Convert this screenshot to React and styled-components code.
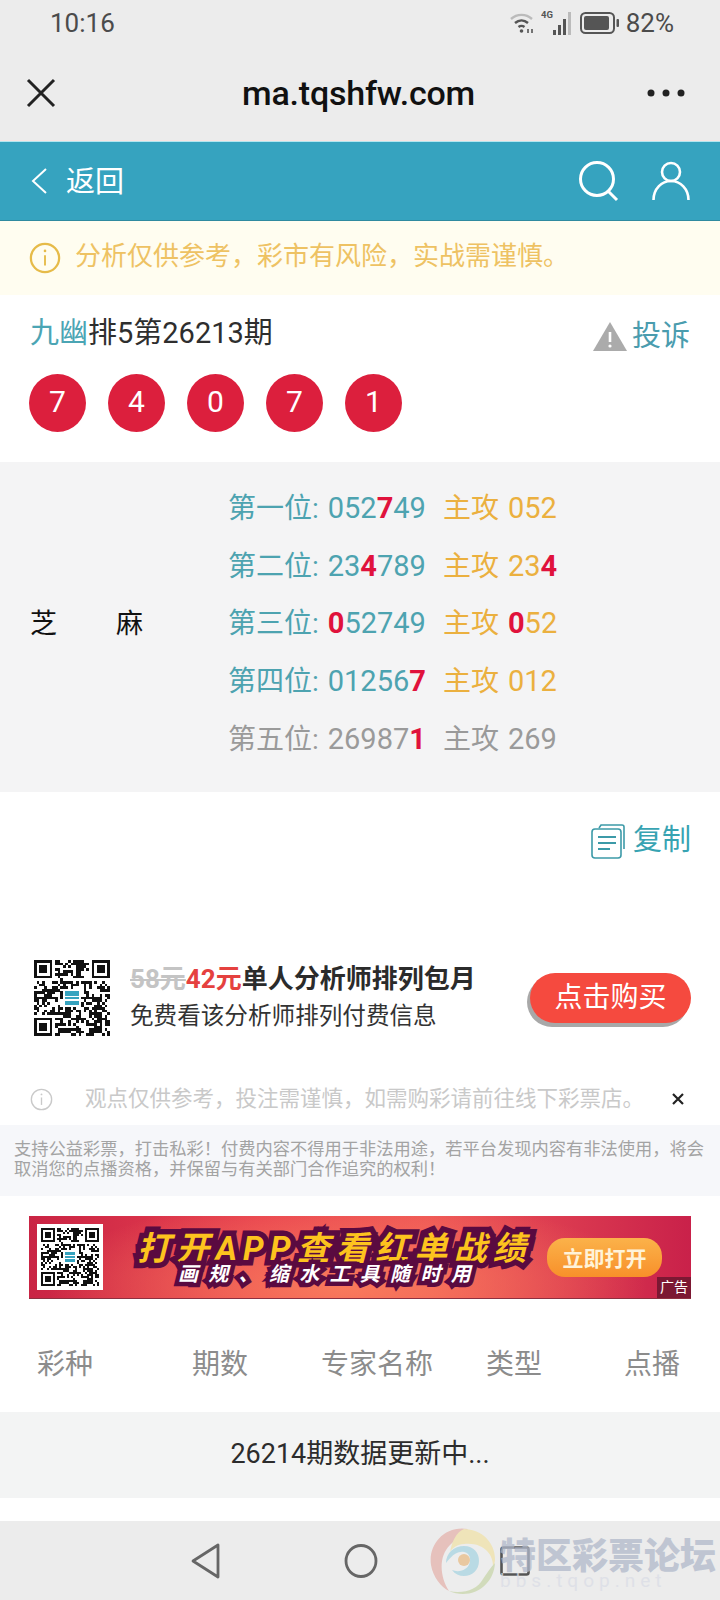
import React from 'react'
import styled, { createGlobalStyle } from 'styled-components'

const GlobalStyle = createGlobalStyle`
  html, body {
    margin: 0;
    padding: 0;
    background: #fff;
  }
  * {
    box-sizing: border-box;
  }
  body {
    font-family: Roboto, "Noto Sans CJK SC", sans-serif;
  }
`

const Page = styled.div`
  position: relative;
  width: 720px;
  height: 1600px;
  overflow: hidden;
  background: #fff;
`

const TopBar = styled.div`
  height: 141px;
  background: #ececec;
  border-bottom: 1px solid #f6e4e2;
`

const StatusBar = styled.div`
  height: 46px;
  padding: 0 46px 0 50px;
  display: flex;
  align-items: center;
  justify-content: space-between;
  color: #4b4b4b;
  font-size: 26px;
`

const StatusRight = styled.div`
  display: flex;
  align-items: center;
  gap: 6px;
`

const TitleBar = styled.div`
  height: 94px;
  padding: 0 35px 0 26px;
  display: flex;
  align-items: center;
  justify-content: space-between;
`

const TitleText = styled.div`
  font-size: 34px;
  font-weight: 500;
  color: #111;
  margin-left: 14px;
  letter-spacing: -0.2px;
`

const NavBar = styled.div`
  height: 80px;
  background: #36a3bf;
  border-top: 1px solid #b5e6ef;
  border-bottom: 1px solid #2f8a9f;
  padding: 0 30px 0 30px;
  display: flex;
  align-items: center;
  justify-content: space-between;
  color: #fff;
`

const NavBack = styled.div`
  display: flex;
  align-items: center;
  gap: 18px;
  font-size: 29px;
  span {
    margin-top: -4px;
  }
`

const NavIcons = styled.div`
  display: flex;
  align-items: center;
  gap: 32px;
`

const Notice = styled.div`
  height: 74px;
  background: #fffdf0;
  padding: 0 29px;
  display: flex;
  align-items: center;
  gap: 14px;
  color: #eec263;
  font-size: 26px;
  span {
    margin-top: -10px;
  }
`

const IssueRow = styled.div`
  padding: 19px 30px 0 30px;
  height: 79px;
  display: flex;
  justify-content: space-between;
  align-items: flex-start;
`

const IssueTitle = styled.div`
  font-size: 29px;
  line-height: 38px;
  color: #2e2e2e;
  span {
    color: #4ba5b4;
  }
`

const Complain = styled.div`
  margin-top: 2px;
  display: flex;
  align-items: center;
  gap: 4px;
  font-size: 29px;
  line-height: 40px;
  color: #4a9cae;
`

const Balls = styled.div`
  height: 88px;
  padding-left: 29px;
  display: flex;
  gap: 22px;
`

const Ball = styled.div`
  width: 57px;
  height: 58px;
  padding-bottom: 3px;
  border-radius: 50%;
  background: #dc1f3d;
  color: #fff;
  font-size: 30px;
  display: flex;
  align-items: center;
  justify-content: center;
`

const Panel = styled.div`
  height: 330px;
  background: #f4f4f5;
  padding-bottom: 11px;
  display: flex;
  align-items: center;
`

const ExpertName = styled.div`
  width: 228px;
  padding-left: 30px;
  display: flex;
  gap: 59px;
  font-size: 27px;
  color: #111;
`

const Rows = styled.div`
  display: flex;
  flex-direction: column;
`

const PickRow = styled.div`
  height: 57.8px;
  display: flex;
  align-items: center;
  font-size: 28px;
  color: ${p => (p.$muted ? '#9a9a9a' : '#4da3b0')};
`

const PickLabel = styled.div`
  width: 215px;
  white-space: pre;
  word-spacing: 2px;
`

const PickFocus = styled.div`
  white-space: pre;
  word-spacing: 2px;
  color: ${p => (p.$muted ? '#9a9a9a' : '#ebb03f')};
`

const Num = styled.span`
  font-size: 29px;
`

const Hit = styled.b`
  color: #e0123c;
  font-weight: 700;
`

const CopyRow = styled.div`
  height: 92px;
  padding: 28px 29px 0 0;
  display: flex;
  justify-content: flex-end;
  align-items: flex-start;
  gap: 8px;
  font-size: 29px;
  line-height: 40px;
  color: #37a3b2;
`

const Promo = styled.div`
  height: 97px;
  margin-top: 65px;
  padding: 0 29px 0 34px;
  display: flex;
  align-items: center;
`

const PromoText = styled.div`
  margin-left: 20px;
  flex: 1;
`

const PromoTitle = styled.div`
  font-size: 26px;
  line-height: 36px;
  font-weight: 700;
  color: #2b2b2b;
`

const OldPrice = styled.s`
  color: #c4c4c4;
`

const NewPrice = styled.span`
  color: #e5413f;
`

const PromoSub = styled.div`
  font-size: 23.6px;
  line-height: 36px;
  color: #333;
  margin-top: 1px;
`

const BuyButton = styled.div`
  width: 161px;
  height: 50px;
  margin-top: 1px;
  padding-bottom: 7px;
  border-radius: 25px;
  background: #f54a3f;
  box-shadow: -3px 4px 0 #a8a8a8;
  color: #fff;
  font-size: 28px;
  display: flex;
  align-items: center;
  justify-content: center;
`

const Tip = styled.div`
  height: 55px;
  margin-top: 24px;
  padding: 3px 36px 0 30px;
  display: flex;
  align-items: center;
  color: #c9c9c9;
  font-size: 21.5px;
`

const TipText = styled.div`
  margin: -6px 0 0 32px;
  flex: 1;
  white-space: nowrap;
`

const TipClose = styled.div`
  color: #222;
  line-height: 0;
`

const Disclaimer = styled.div`
  height: 71px;
  background: #f6f7fa;
  padding: 14px 14px 0 14px;
  font-size: 17.25px;
  line-height: 20px;
  color: #a3a3a3;
`

const Banner = styled.div`
  position: relative;
  height: 83px;
  margin: 20px 29px 0;
  padding-left: 8px;
  display: flex;
  align-items: center;
  overflow: hidden;
  background:
    radial-gradient(ellipse 300px 90px at 48% 85%, #f97a5c 0%, rgba(249, 122, 92, 0) 100%),
    linear-gradient(90deg, #c92444 0%, #e8414f 35%, #ee5556 60%, #c9214a 100%);
  border-bottom: 1px solid #8d3040;
`

const BannerQr = styled.div`
  width: 66px;
  height: 66px;
  background: #fff;
  padding: 4px;
  line-height: 0;
`

const BannerCopy = styled.div`
  margin-left: 34px;
  width: 407px;
`

const BannerHead = styled.div`
  margin-top: 4px;
  font-size: 33px;
  line-height: 35px;
  font-weight: 700;
  font-style: italic;
  letter-spacing: 6.2px;
  white-space: nowrap;
  color: #fdc31e;
  -webkit-text-stroke: 11px #5a0a40;
  paint-order: stroke fill;
`

const BannerSub = styled.div`
  margin: -5px 0 0 41px;
  font-size: 20px;
  line-height: 26px;
  font-weight: 700;
  font-style: italic;
  letter-spacing: 10.3px;
  white-space: nowrap;
  color: #fff;
  -webkit-text-stroke: 9px #5a0a40;
  paint-order: stroke fill;
`

const BannerBtn = styled.div`
  width: 115px;
  height: 39px;
  margin-left: 3px;
  border-radius: 18px;
  background: linear-gradient(180deg, #fbb24a 0%, #f8902a 100%);
  color: #fff3d8;
  font-size: 21px;
  font-weight: 700;
  display: flex;
  align-items: center;
  justify-content: center;
`

const AdTag = styled.div`
  position: absolute;
  right: 0;
  bottom: 0;
  width: 34px;
  height: 21px;
  background: #7c1833;
  color: #fff;
  font-size: 14px;
  line-height: 21px;
  text-align: center;
`

const TableHead = styled.div`
  height: 113px;
  padding: 12px 0 0 37px;
  display: grid;
  grid-template-columns: 155px 129px 165px 138px 96px;
  align-items: center;
  font-size: 28px;
  color: #8c8c8c;
`

const UpdateRow = styled.div`
  height: 86px;
  padding-bottom: 7px;
  background: #f3f4f4;
  display: flex;
  align-items: center;
  justify-content: center;
  font-size: 27px;
  color: #2c2c2c;
`

const SystemNav = styled.div`
  margin-top: 23px;
  height: 79px;
  background: #ececec;
  display: flex;
  align-items: center;
  padding-left: 190px;
  gap: 122px;
`

const Watermark = styled.div`
  position: absolute;
  left: 428px;
  bottom: 5px;
  display: flex;
  align-items: flex-start;
  opacity: 0.75;
  pointer-events: none;
`

const WatermarkText = styled.div`
  padding: 8px 0 0 4px;
`

const WatermarkName = styled.div`
  font-family: "Noto Sans CJK SC", sans-serif;
  font-size: 36px;
  line-height: 36px;
  font-weight: 900;
  color: #b0b8ca;
  white-space: nowrap;
`

const WatermarkUrl = styled.div`
  font-size: 19px;
  line-height: 20px;
  letter-spacing: 5px;
  color: #dadde6;
  white-space: nowrap;
`

// fake qr modules, seeded so it stays the same between runs
const QrCode = ({ size, badge }) => {
  const n = 29
  const cells = []
  let seed = 73
  const inFinder = (x, y) =>
    (x < 8 && y < 8) || (x > n - 9 && y < 8) || (x < 8 && y > n - 9)
  for (let y = 0; y < n; y++) {
    for (let x = 0; x < n; x++) {
      seed = (seed * 1103515245 + 12345) & 0x7fffffff
      if (!inFinder(x, y) && (seed >> 16) % 100 < 50) {
        cells.push(<rect key={`${x}-${y}`} x={x} y={y} width="1.02" height="1.02" />)
      }
    }
  }
  const finder = (x, y) => (
    <g key={`f${x}${y}`}>
      <rect x={x} y={y} width="7" height="7" />
      <rect x={x + 1} y={y + 1} width="5" height="5" fill="#fff" />
      <rect x={x + 2} y={y + 2} width="3" height="3" />
    </g>
  )
  return (
    <svg width={size} height={size} viewBox={`0 0 ${n} ${n}`} fill="#111" shapeRendering="crispEdges">
      {cells}
      {finder(0, 0)}
      {finder(n - 7, 0)}
      {finder(0, n - 7)}
      <rect x="11" y="11" width="7" height="7" fill="#fff" />
      <rect x="12" y="12" width="5" height="5" fill={badge} />
      <rect x="12" y="13.6" width="5" height="0.5" fill="#fff" />
      <rect x="12" y="15" width="5" height="0.5" fill="#fff" />
    </svg>
  )
}

const WifiIcon = () => (
  <svg width="26" height="24" viewBox="0 0 26 24" fill="none" stroke="#555" strokeWidth="2.4">
    <path d="M2 8c6-5.500 15-5.500 21 0" stroke="#bbb" />
    <path d="M6 12c4-3.500 9-3.500 13 0" />
    <path d="M9.500 16c2-1.500 4-1.500 6 0" />
    <circle cx="12.500" cy="20" r="1.800" fill="#555" stroke="none" />
    <path d="M19 22v-4M23 22v-4" strokeWidth="1.600" />
  </svg>
)

const SignalIcon = () => (
  <svg width="33" height="28" viewBox="0 0 33 28" fill="#555">
    <text x="0" y="9" fontSize="9.500" fontWeight="700" fontFamily="Roboto, sans-serif">4G</text>
    <rect x="12" y="21" width="3" height="5" />
    <rect x="17" y="16" width="3" height="10" />
    <rect x="22" y="10" width="3" height="16" />
    <rect x="27" y="3" width="3" height="23" fill="#bbb" />
  </svg>
)

const BatteryIcon = () => (
  <svg width="40" height="24" viewBox="0 0 40 24" fill="none">
    <rect x="1" y="2" width="33" height="20" rx="4.500" stroke="#555" strokeWidth="2" />
    <rect x="4" y="5" width="25" height="14" rx="2" fill="#555" />
    <rect x="36.500" y="8" width="2.500" height="8" rx="1" fill="#555" />
  </svg>
)

const CloseIcon = () => (
  <svg width="30" height="30" viewBox="0 0 30 30" stroke="#222" strokeWidth="3">
    <path d="M2 2l26 26M28 2L2 28" />
  </svg>
)

const MoreIcon = () => (
  <svg width="38" height="8" viewBox="0 0 38 8" fill="#222">
    <circle cx="4" cy="4" r="3.500" />
    <circle cx="19" cy="4" r="3.500" />
    <circle cx="34" cy="4" r="3.500" />
  </svg>
)

const BackIcon = () => (
  <svg width="18" height="28" viewBox="0 0 18 28" fill="none" stroke="#fff" strokeWidth="2">
    <path d="M16 2L3 14l13 12" />
  </svg>
)

const SearchIcon = () => (
  <svg width="42" height="42" viewBox="0 0 42 42" fill="none" stroke="#fff" strokeWidth="3">
    <circle cx="19" cy="19" r="16.500" />
    <path d="M30 31l9 9" />
  </svg>
)

const UserIcon = () => (
  <svg width="38" height="40" viewBox="0 0 38 40" fill="none" stroke="#fff" strokeWidth="2.600">
    <circle cx="19" cy="11" r="9" />
    <path d="M1.500 39c0-11 8-19 17.500-19s17.500 8 17.500 19" />
  </svg>
)

const InfoIcon = ({ color, size, width }) => (
  <svg width={size} height={size} viewBox="0 0 34 34" fill="none" stroke={color} strokeWidth={width}>
    <circle cx="17" cy="17" r="15" />
    <path d="M17 14v11" strokeWidth="2" />
    <circle cx="17" cy="9.500" r="1.400" fill={color} stroke="none" />
  </svg>
)

const WarnIcon = () => (
  <svg width="36" height="30" viewBox="0 0 36 30">
    <path d="M18 1L35 30H1z" fill="#ababab" />
    <path d="M18 11v10" stroke="#fff" strokeWidth="2.600" />
    <circle cx="18" cy="25" r="1.600" fill="#fff" />
  </svg>
)

const CopyIcon = () => (
  <svg width="34" height="36" viewBox="0 0 34 36" fill="none" stroke="#3c9aa8" strokeWidth="1.600" style={{ marginTop: 3 }}>
    <path d="M8 5l2-3h21c1 0 2 1 2 2v22" />
    <rect x="1" y="6" width="29" height="29" rx="3" />
    <path d="M7 14h18M7 20h18M7 26h12" strokeWidth="2" />
  </svg>
)

const TipCloseIcon = () => (
  <svg width="12" height="12" viewBox="0 0 12 12" stroke="#222" strokeWidth="2.200">
    <path d="M1 1l10 10M11 1L1 11" />
  </svg>
)

const NavBackIcon = () => (
  <svg width="32" height="36" viewBox="0 0 32 36" fill="none" stroke="#666" strokeWidth="2.800" strokeLinejoin="round">
    <path d="M28 2v32L3 18z" />
  </svg>
)

const NavHomeIcon = () => (
  <svg width="34" height="36" viewBox="0 0 34 36" fill="none" stroke="#666" strokeWidth="2.800">
    <ellipse cx="17" cy="18" rx="15" ry="15.500" />
  </svg>
)

const NavRecentIcon = () => (
  <svg width="30" height="30" viewBox="0 0 30 30" fill="none" stroke="#555" strokeWidth="2.600">
    <rect x="1.500" y="1.500" width="27" height="27" rx="2" />
  </svg>
)

const SwirlLogo = () => (
  <svg width="68" height="68" viewBox="0 0 68 68" fill="none">
    <circle cx="34" cy="34" r="33" fill="#eee" />
    <path d="M40 2C16 -2 0 18 3 38c2 12 10 22 18 26C12 50 10 30 22 18c6-6 12-10 18-16z" fill="#e4b3ad" />
    <path d="M36 2c18 0 31 14 31 30 0 3-1 6-2 9 1-14-10-26-29-24-6 0-12 4-14 8 2-10 6-20 14-23z" fill="#f0e2a8" />
    <path d="M67 36c-1 18-15 31-32 31-5 0-10-1-14-3 14 3 28-1 34-12 4-6 8-12 12-16z" fill="#c9d6ab" />
    <path d="M18 36c0-10 8-17 18-17 10 0 15 7 15 15 0 9-7 15-15 15-5 0-9-2-12-6 7 3 17 0 18-9 1-6-4-10-9-9-6 0-10 5-15 11z" fill="#a9d5e2" />
    <circle cx="36" cy="33" r="6" fill="#e8bd87" />
  </svg>
)

const picks = [
  { name: '第一位', nums: <>052<Hit>7</Hit>49</>, focus: <>052</> },
  { name: '第二位', nums: <>23<Hit>4</Hit>789</>, focus: <>23<Hit>4</Hit></> },
  { name: '第三位', nums: <><Hit>0</Hit>52749</>, focus: <><Hit>0</Hit>52</> },
  { name: '第四位', nums: <>01256<Hit>7</Hit></>, focus: <>012</> },
  { name: '第五位', nums: <>26987<Hit>1</Hit></>, focus: <>269</>, muted: true },
]

const App = () => {
  return (
    <Page>
      <GlobalStyle />
      <TopBar>
        <StatusBar>
          <span>10:16</span>
          <StatusRight>
            <WifiIcon />
            <SignalIcon />
            <BatteryIcon />
            <span>82%</span>
          </StatusRight>
        </StatusBar>
        <TitleBar>
          <CloseIcon />
          <TitleText>ma.tqshfw.com</TitleText>
          <MoreIcon />
        </TitleBar>
      </TopBar>

      <NavBar>
        <NavBack>
          <BackIcon />
          <span>返回</span>
        </NavBack>
        <NavIcons>
          <SearchIcon />
          <UserIcon />
        </NavIcons>
      </NavBar>

      <Notice>
        <InfoIcon color="#e6bb49" size={32} width={2.4} />
        <span>分析仅供参考，彩市有风险，实战需谨慎。</span>
      </Notice>

      <IssueRow>
        <IssueTitle><span>九幽</span>排5第26213期</IssueTitle>
        <Complain>
          <WarnIcon />
          <span>投诉</span>
        </Complain>
      </IssueRow>

      <Balls>
        {[7, 4, 0, 7, 1].map((n, i) => <Ball key={i}>{n}</Ball>)}
      </Balls>

      <Panel>
        <ExpertName>
          <span>芝</span>
          <span>麻</span>
        </ExpertName>
        <Rows>
          {picks.map(p => (
            <PickRow key={p.name} $muted={p.muted}>
              <PickLabel>{p.name}: <Num>{p.nums}</Num></PickLabel>
              <PickFocus $muted={p.muted}>主攻 <Num>{p.focus}</Num></PickFocus>
            </PickRow>
          ))}
        </Rows>
      </Panel>

      <CopyRow>
        <CopyIcon />
        <span>复制</span>
      </CopyRow>

      <Promo>
        <QrCode size={76} badge="#36a3bf" />
        <PromoText>
          <PromoTitle><OldPrice>58元</OldPrice><NewPrice>42元</NewPrice>单人分析师排列包月</PromoTitle>
          <PromoSub>免费看该分析师排列付费信息</PromoSub>
        </PromoText>
        <BuyButton>点击购买</BuyButton>
      </Promo>

      <Tip>
        <InfoIcon color="#c9c9c9" size={23} width={2} />
        <TipText>观点仅供参考，投注需谨慎，如需购彩请前往线下彩票店。</TipText>
        <TipClose><TipCloseIcon /></TipClose>
      </Tip>

      <Disclaimer>
        支持公益彩票，打击私彩！付费内容不得用于非法用途，若平台发现内容有非法使用，将会取消您的点播资格，并保留与有关部门合作追究的权利！
      </Disclaimer>

      <Banner>
        <BannerQr><QrCode size={58} badge="#36a3bf" /></BannerQr>
        <BannerCopy>
          <BannerHead>打开APP查看红单战绩</BannerHead>
          <BannerSub>画规、缩水工具随时用</BannerSub>
        </BannerCopy>
        <BannerBtn>立即打开</BannerBtn>
        <AdTag>广告</AdTag>
      </Banner>

      <TableHead>
        <span>彩种</span>
        <span>期数</span>
        <span>专家名称</span>
        <span>类型</span>
        <span>点播</span>
      </TableHead>

      <UpdateRow>26214期数据更新中...</UpdateRow>

      <SystemNav>
        <NavBackIcon />
        <NavHomeIcon />
        <NavRecentIcon />
      </SystemNav>

      <Watermark>
        <SwirlLogo />
        <WatermarkText>
          <WatermarkName>特区彩票论坛</WatermarkName>
          <WatermarkUrl>bbs.tqop.net</WatermarkUrl>
        </WatermarkText>
      </Watermark>
    </Page>
  )
}

export default App
